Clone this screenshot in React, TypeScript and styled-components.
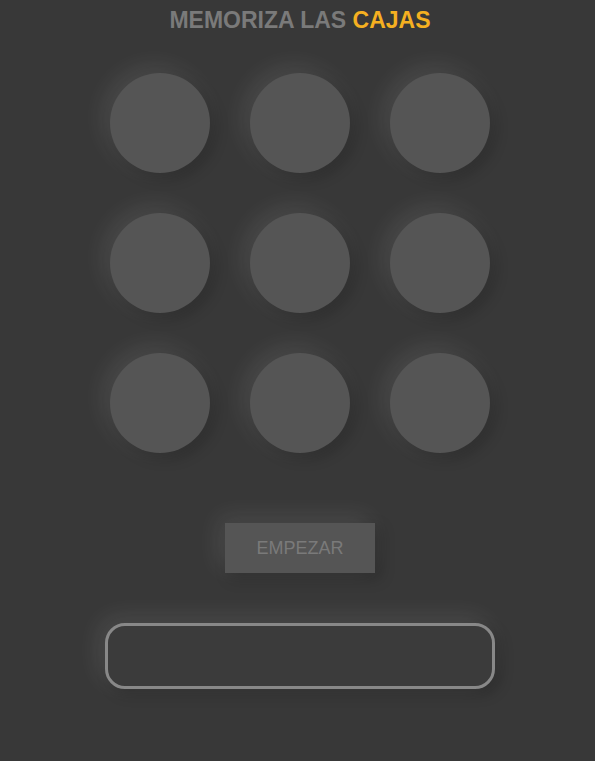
import React from "react";
import styled, { createGlobalStyle } from "styled-components";

const Global = createGlobalStyle`
  html, body { margin: 0; padding: 0; background: #383838; }
  body { font-family: "Liberation Sans", Arial, sans-serif; }
`;

const Page = styled.div`
  display: flex;
  flex-direction: column;
  align-items: center;
  min-height: 761px;
  padding-top: 7px;
  padding-left: 5px;
  box-sizing: border-box;
`;

const Title = styled.h1`
  margin: 0;
  font-size: 23px;
  line-height: 26px;
  font-weight: 700;
  color: #7a7a7a;
`;

const Accent = styled.span`
  color: #f5b021;
`;

const Grid = styled.div`
  display: grid;
  grid-template-columns: repeat(3, 100px);
  gap: 40px;
  margin-top: 40px;
`;

const glow = `-6px -6px 24px rgba(255, 255, 255, 0.1), 5px 5px 14px rgba(0, 0, 0, 0.22)`;

const Cell = styled.div`
  width: 100px;
  height: 100px;
  border-radius: 50%;
  background: #555555;
  box-shadow: ${glow};
`;

const StartButton = styled.button`
  margin-top: 70px;
  width: 150px;
  height: 50px;
  border: none;
  background: #555555;
  color: #7a7a7a;
  font-family: "Liberation Sans", Arial, sans-serif;
  font-size: 18px;
  text-transform: uppercase;
  box-shadow: ${glow};
  cursor: pointer;
`;

const Answer = styled.div`
  margin-top: 50px;
  width: 390px;
  height: 66px;
  box-sizing: border-box;
  border: 3px solid #888888;
  border-radius: 20px;
  background: #3b3b3b;
  box-shadow: ${glow};
`;

export default function App() {
  return (
    <>
      <Global />
      <Page>
        <Title>
          MEMORIZA LAS <Accent>CAJAS</Accent>
        </Title>
        <Grid>
          {Array.from({ length: 9 }).map((_, i) => (
            <Cell key={i} />
          ))}
        </Grid>
        <StartButton>Empezar</StartButton>
        <Answer />
      </Page>
    </>
  );
}
